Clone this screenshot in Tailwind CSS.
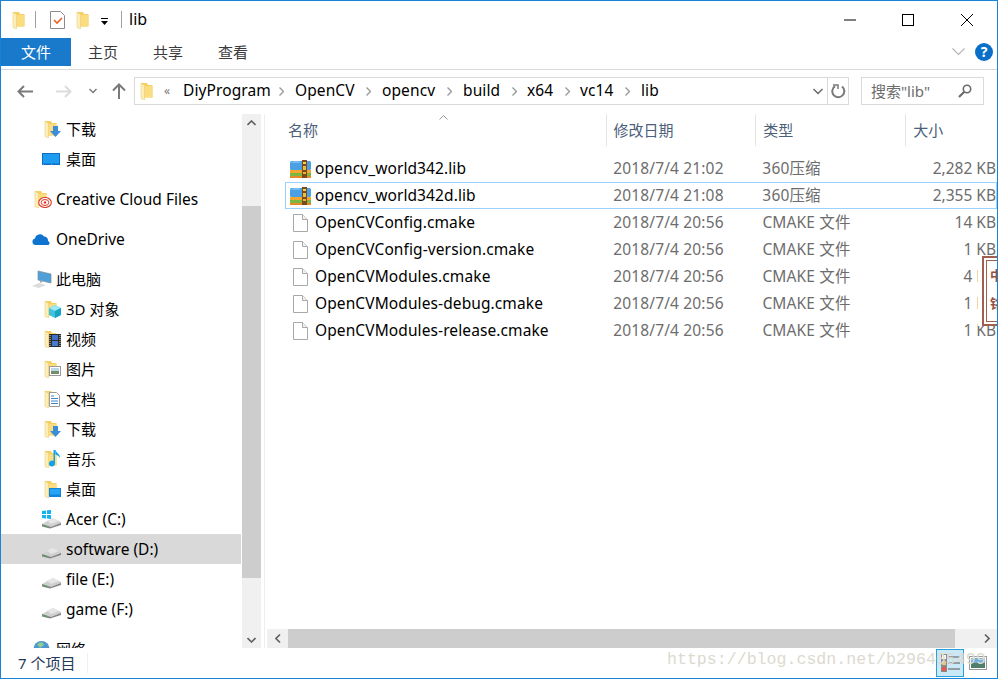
<!DOCTYPE html>
<html lang="zh-CN">
<head>
<meta charset="utf-8">
<script src="https://cdn.jsdelivr.net/npm/@tailwindcss/browser@4"></script>
</head>
<body class="m-0 bg-white">
<svg width="0" height="0" class="absolute">
  <defs>
    <symbol id="fld" viewBox="0 0 13 18">
      <path d="M1 1h6l1 2h4.500v12.500H1z" fill="#f6cf64"/>
      <path d="M3 4h9.500v11.500H3z" fill="#fbdc80"/>
      <path d="M1 1l3.500 2.500V18L1 16.500z" fill="#fdeeb5" stroke="#e8c66c" stroke-width=".5"/>
    </symbol>
    <symbol id="drive" viewBox="0 0 19 12">
      <path d="M0 7L11 1l8 4v2L8 11 0 9z" fill="#d0d0d0"/>
      <path d="M0 7l9 3 10-4v2L8 11.500 0 9.500z" fill="#858585"/>
      <path d="M5 3.500L11 1l6 3-8 3z" fill="#e6e6e6"/>
      <path d="M2 8.500l3 1" stroke="#3fae4e" stroke-width="1.200"/>
    </symbol>
    <symbol id="rar" viewBox="0 0 21 18">
      <rect x="0" y="1" width="21" height="9" rx="1.500" fill="#4b9fe3"/>
      <path d="M0 3l4-2h5l2 2z" fill="#74bdf2"/>
      <rect x="0" y="10" width="21" height="3" fill="#f0a830"/>
      <rect x="0" y="13" width="21" height="3" fill="#7cb742"/>
      <rect x="0" y="16" width="21" height="2" fill="#e58a24"/>
      <rect x="12" y="0" width="5" height="18" fill="#7c4a1d"/>
      <rect x="13" y="2" width="3" height="2" fill="#f5d24a"/>
      <rect x="13" y="6" width="3" height="4" fill="#e8c040"/>
      <rect x="13" y="12" width="3" height="2" fill="#e9b53a"/>
    </symbol>
    <symbol id="doc" viewBox="0 0 15 18">
      <path d="M.5.5h9l5 5v12H.5z" fill="#fff" stroke="#a8a8a8"/>
      <path d="M9.500.5v5h5" fill="#f2f2f2" stroke="#a8a8a8"/>
    </symbol>
  </defs>
</svg>

<div class="relative w-[998px] h-[679px] overflow-hidden border border-[#1883d7] bg-white flex flex-col text-black text-[15.5px] [font-family:'Noto_Sans','Noto_Sans_CJK_SC',sans-serif]">

  <!-- title bar -->
  <div class="h-[37px] shrink-0 flex items-center relative">
    <svg class="ml-[11px] w-[13px] h-[18px]"><use href="#fld"/></svg>
    <div class="ml-[10px] w-px h-[17px] bg-[#a0a0a0]"></div>
    <svg class="ml-[14px] w-[15px] h-[18px]" viewBox="0 0 15 18"><path d="M.5.5h10l4 4v13H.5z" fill="#fff" stroke="#8c8c8c"/><path d="M4 9l3 3 5-5" fill="none" stroke="#e8622a" stroke-width="1.700"/></svg>
    <svg class="ml-[11px] w-[13px] h-[18px]"><use href="#fld"/></svg>
    <svg class="ml-[11px] w-[9px] h-[8px] mt-[4px]" viewBox="0 0 9 8"><path d="M1 0h7v1H1zM1 3h7L4.500 7z" fill="#000"/></svg>
    <div class="ml-[12px] w-px h-[17px] bg-[#a0a0a0]"></div>
    <span class="ml-[7px] text-[16px] -mt-[1px]">lib</span>
    <div class="ml-auto flex items-center">
      <svg class="w-[12px] h-[12px] mr-[46px]" viewBox="0 0 12 12"><path d="M0 6h12" stroke="#000"/></svg>
      <svg class="w-[12px] h-[12px] mr-[47px]" viewBox="0 0 12 12"><rect x=".5" y=".5" width="11" height="11" fill="none" stroke="#000"/></svg>
      <svg class="w-[12px] h-[12px] mr-[24px]" viewBox="0 0 12 12"><path d="M0 0l12 12M12 0L0 12" stroke="#000"/></svg>
    </div>
  </div>

  <!-- ribbon tabs -->
  <div class="h-[32px] shrink-0 flex border-b border-[#d9d9d9] text-[15px] text-[#3b3b3b] relative">
    <div class="w-[70px] h-[28px] bg-[#1979ca] text-white flex items-center justify-center">文件</div>
    <div class="ml-[17px] w-[30px] h-[28px] flex items-center justify-center whitespace-nowrap">主页</div>
    <div class="ml-[35px] w-[30px] h-[28px] flex items-center justify-center whitespace-nowrap">共享</div>
    <div class="ml-[35px] w-[30px] h-[28px] flex items-center justify-center whitespace-nowrap">查看</div>
    <div class="ml-auto flex items-center h-[28px] mr-[4px]">
      <svg class="w-[13px] h-[8px] mr-[10px]" viewBox="0 0 13 8"><path d="M.5.500l6 6 6-6" fill="none" stroke="#b5b5b5" stroke-width="1.200"/></svg>
      <div class="w-[18px] h-[18px] rounded-full bg-[#0a6fc9] text-white text-[14px] font-bold flex items-center justify-center leading-none">?</div>
    </div>
  </div>

  <!-- address row -->
  <div class="h-[42px] shrink-0 flex items-center">
    <svg class="ml-[16px] w-[16px] h-[13px]" viewBox="0 0 16 13"><path d="M7 1L1.500 6.500 7 12M2 6.500h14" fill="none" stroke="#7a7a7a" stroke-width="2"/></svg>
    <svg class="ml-[23px] w-[16px] h-[13px]" viewBox="0 0 16 13"><path d="M9 1l5.500 5.500L9 12M14 6.500H0" fill="none" stroke="#dcdcdc" stroke-width="2"/></svg>
    <svg class="ml-[17px] w-[8px] h-[6px]" viewBox="0 0 8 6"><path d="M.5 1L4 4.500 7.500 1" fill="none" stroke="#7a7a7a" stroke-width="1.500"/></svg>
    <svg class="ml-[15px] w-[14px] h-[16px]" viewBox="0 0 14 16"><path d="M1 7.500L7 1.500l6 6M7 2v14" fill="none" stroke="#7a7a7a" stroke-width="2"/></svg>
    <div class="ml-[8px] w-[715px] h-[28px] border border-[#d9d9d9] flex items-center relative">
      <svg class="ml-[5px] w-[13px] h-[18px] shrink-0"><use href="#fld"/></svg>
      <span class="ml-[11px] w-[12px] text-[12px] text-[#7a7a7a]">«</span>
      <div class="flex items-center whitespace-nowrap tracking-[0.1px]">
        <span class="ml-[7px] w-[96px]">DiyProgram</span>
        <svg class="w-[5px] h-[9px] shrink-0" viewBox="0 0 5 9"><path d="M.5.500l4 4-4 4" fill="none" stroke="#9a9a9a" stroke-width="1.400"/></svg>
        <span class="ml-[11px] w-[71px]">OpenCV</span>
        <svg class="w-[5px] h-[9px] shrink-0" viewBox="0 0 5 9"><path d="M.5.500l4 4-4 4" fill="none" stroke="#9a9a9a" stroke-width="1.400"/></svg>
        <span class="ml-[11px] w-[65px]">opencv</span>
        <svg class="w-[5px] h-[9px] shrink-0" viewBox="0 0 5 9"><path d="M.5.500l4 4-4 4" fill="none" stroke="#9a9a9a" stroke-width="1.400"/></svg>
        <span class="ml-[11px] w-[49px]">build</span>
        <svg class="w-[5px] h-[9px] shrink-0" viewBox="0 0 5 9"><path d="M.5.500l4 4-4 4" fill="none" stroke="#9a9a9a" stroke-width="1.400"/></svg>
        <span class="ml-[10px] w-[38px]">x64</span>
        <svg class="w-[5px] h-[9px] shrink-0" viewBox="0 0 5 9"><path d="M.5.500l4 4-4 4" fill="none" stroke="#9a9a9a" stroke-width="1.400"/></svg>
        <span class="ml-[10px] w-[45px]">vc14</span>
        <svg class="w-[5px] h-[9px] shrink-0" viewBox="0 0 5 9"><path d="M.5.500l4 4-4 4" fill="none" stroke="#9a9a9a" stroke-width="1.400"/></svg>
        <span class="ml-[11px]">lib</span>
      </div>
      <svg class="ml-auto mr-[4px] w-[10px] h-[7px]" viewBox="0 0 10 7"><path d="M.5 1L5 5.500 9.500 1" fill="none" stroke="#6a6a6a" stroke-width="1.500"/></svg>
      <div class="w-[21px] h-[26px] border-l border-[#d9d9d9] flex items-center justify-center">
        <svg class="w-[15px] h-[15px]" viewBox="0 0 15 15"><path d="M4 2.200A6 6 0 1 0 11 2.500" fill="none" stroke="#7a7a7a" stroke-width="2"/><path d="M2 1h5v4" fill="none" stroke="#7a7a7a" stroke-width="1.500"/></svg>
      </div>
    </div>
    <div class="ml-[12px] w-[123px] h-[28px] border border-[#d9d9d9] flex items-center pl-[9px] pr-[9px] text-[15px] text-[#6d6d6d]">
      <span class="whitespace-nowrap">搜索"lib"</span>
      <svg class="ml-auto mr-[2px] w-[14px] h-[14px]" viewBox="0 0 14 14"><circle cx="9" cy="5" r="3.700" fill="none" stroke="#6a6a6a" stroke-width="1.600"/><path d="M6.300 7.800L1 13" stroke="#6a6a6a" stroke-width="2.200"/></svg>
    </div>
  </div>

  <!-- body -->
  <div class="h-[534px] mt-[2px] shrink-0 flex">
    <!-- nav -->
    <div class="w-[240px] shrink-0 overflow-hidden">
      <div class="h-[30px] flex items-center pl-[43px]"><span class="relative w-[22px] h-[18px]"><svg class="absolute left-0 top-0 w-[13px] h-[18px]"><use href="#fld"/></svg><svg class="absolute left-[6px] top-[6px] w-[11px] h-[11px]" viewBox="0 0 11 11"><path d="M3 0h5v5h3L5.500 11 0 5h3z" fill="#3a8dd8"/></svg></span><span class="text-[15px]">下载</span></div>
      <div class="h-[30px] flex items-center pl-[41px]"><svg class="w-[18px] h-[13px] mr-[6px]" viewBox="0 0 18 13"><rect width="18" height="12" fill="#0f6fc6"/><rect x="1" y="1" width="16" height="9.500" fill="#1e9cf2"/><path d="M1 12h16" stroke="#bfe3fb" stroke-dasharray="1 7"/></svg><span class="text-[15px]">桌面</span></div>

      <div class="h-[30px] mt-[10px] flex items-center pl-[33px]"><span class="relative w-[22px] h-[18px]"><svg class="absolute left-0 top-0 w-[13px] h-[18px]"><use href="#fld"/></svg><svg class="absolute left-[4px] top-[7px] w-[14px] h-[11px]" viewBox="0 0 14 11"><ellipse cx="7" cy="5.500" rx="6.300" ry="5" fill="#fff" stroke="#d93a2b" stroke-width="1.100"/><ellipse cx="7" cy="5.500" rx="3.800" ry="3" fill="none" stroke="#d93a2b"/><circle cx="7" cy="5.500" r="1.300" fill="#d93a2b"/></svg></span><span class="pt-[2px]">Creative Cloud Files</span></div>

      <div class="h-[30px] mt-[10px] flex items-center pl-[31px]"><svg class="w-[19px] h-[12px] mr-[5px]" viewBox="0 0 19 12"><path d="M3.500 12A3.300 3.300 0 0 1 3 5.500 5 5 0 0 1 12 3.500 4 4 0 0 1 16 8 2.200 2.200 0 0 1 16.500 12z" fill="#0f74cf"/></svg><span class="pt-[2px]">OneDrive</span></div>

      <div class="h-[30px] mt-[10px] flex items-center pl-[31px]"><svg class="w-[20px] h-[18px] mr-[4px]" viewBox="0 0 20 18"><path d="M6 1l13 3v9L6 10z" fill="#4fa0d8" stroke="#7b8c99" stroke-width=".7"/><path d="M9 10.500v2" stroke="#9aa5ad" stroke-width="2"/><path d="M0 16l7-3 7 2-7 3z" fill="#dcdcdc"/></svg><span class="text-[15px]">此电脑</span></div>

      <div class="h-[30px] flex items-center pl-[43px]"><span class="relative w-[22px] h-[18px]"><svg class="absolute left-0 top-0 w-[13px] h-[18px]"><use href="#fld"/></svg><svg class="absolute left-[5px] top-[5px] w-[12px] h-[13px]" viewBox="0 0 12 13"><path d="M6 0l6 3v7l-6 3-6-3V3z" fill="#3fc3dc"/><path d="M0 3l6 3 6-3-6-3z" fill="#9be7f2"/><path d="M6 6v7l6-3V3z" fill="#17a4c4"/></svg></span><span class="text-[15px]">3D 对象</span></div>
      <div class="h-[30px] flex items-center pl-[43px]"><span class="relative w-[22px] h-[18px]"><svg class="absolute left-0 top-0 w-[13px] h-[18px]"><use href="#fld"/></svg><svg class="absolute left-[5px] top-[4px] w-[12px] h-[13px]" viewBox="0 0 12 13"><rect width="12" height="13" fill="#2d2d2d"/><rect x="3" y="1" width="6" height="5" fill="#3d6fc4"/><rect x="3" y="7" width="6" height="5" fill="#4a7ad0"/><path d="M1 1v11M11 1v11" stroke="#d9d9d9" stroke-dasharray="1 1"/></svg></span><span class="text-[15px]">视频</span></div>
      <div class="h-[30px] flex items-center pl-[43px]"><span class="relative w-[22px] h-[18px]"><svg class="absolute left-0 top-0 w-[13px] h-[18px]"><use href="#fld"/></svg><svg class="absolute left-[5px] top-[6px] w-[12px] h-[10px]" viewBox="0 0 12 10"><rect x=".5" y=".5" width="11" height="9" fill="#fff" stroke="#9a9a9a"/><rect x="2" y="2" width="8" height="3" fill="#bcd6ea"/><rect x="2" y="5" width="8" height="3" fill="#6f8f6f"/></svg></span><span class="text-[15px]">图片</span></div>
      <div class="h-[30px] flex items-center pl-[43px]"><span class="relative w-[22px] h-[18px]"><svg class="absolute left-0 top-0 w-[13px] h-[18px]"><use href="#fld"/></svg><svg class="absolute left-[5px] top-[2px] w-[11px] h-[15px]" viewBox="0 0 11 15"><path d="M.5.500h7l3 3v11H.5z" fill="#fff" stroke="#9a9a9a"/><path d="M2 4h3M2 6.500h7M2 9h7M2 11.500h7" stroke="#3a87c8"/></svg></span><span class="text-[15px]">文档</span></div>
      <div class="h-[30px] flex items-center pl-[43px]"><span class="relative w-[22px] h-[18px]"><svg class="absolute left-0 top-0 w-[13px] h-[18px]"><use href="#fld"/></svg><svg class="absolute left-[6px] top-[6px] w-[11px] h-[11px]" viewBox="0 0 11 11"><path d="M3 0h5v5h3L5.500 11 0 5h3z" fill="#3a8dd8"/></svg></span><span class="text-[15px]">下载</span></div>
      <div class="h-[30px] flex items-center pl-[43px]"><span class="relative w-[22px] h-[18px]"><svg class="absolute left-0 top-0 w-[13px] h-[18px]"><use href="#fld"/></svg><svg class="absolute left-[5px] top-[0px] w-[12px] h-[18px]" viewBox="0 0 12 18"><path d="M6 0v13.500A3 3 0 1 1 4.500 11V0h2c.5 3 5 4 4.500 8-.8-2-3-3-4.500-3.500" fill="#0fa0ee"/></svg></span><span class="text-[15px]">音乐</span></div>
      <div class="h-[30px] flex items-center pl-[43px]"><span class="relative w-[22px] h-[18px]"><svg class="absolute left-0 top-0 w-[13px] h-[18px]"><use href="#fld"/></svg><svg class="absolute left-[5px] top-[8px] w-[12px] h-[9px]" viewBox="0 0 12 9"><rect width="12" height="9" fill="#1284dc"/><rect x="1" y="1" width="10" height="5.500" fill="#28a4f4"/></svg></span><span class="text-[15px]">桌面</span></div>
      <div class="h-[30px] flex items-center pl-[41px]"><span class="relative w-[24px] h-[18px]"><svg class="absolute left-0 top-[7px] w-[19px] h-[12px]"><use href="#drive"/></svg><svg class="absolute left-0 top-0 w-[9px] h-[9px]" viewBox="0 0 9 9"><path d="M0 1l4-.6V4H0zM5 .2L9 0v4H5zM0 5h4v3.600L0 8zM5 5h4v4l-4-.5z" fill="#12b4f0"/></svg></span><span class="pt-[2px]">Acer (C:)</span></div>
      <div class="h-[30px] flex items-center pl-[41px] bg-[#d9d9d9]"><span class="relative w-[24px] h-[18px]"><svg class="absolute left-0 top-[7px] w-[19px] h-[12px]"><use href="#drive"/></svg></span><span class="pt-[2px]">software (D:)</span></div>
      <div class="h-[30px] flex items-center pl-[41px]"><span class="relative w-[24px] h-[18px]"><svg class="absolute left-0 top-[7px] w-[19px] h-[12px]"><use href="#drive"/></svg></span><span class="pt-[2px]">file (E:)</span></div>
      <div class="h-[30px] flex items-center pl-[41px]"><span class="relative w-[24px] h-[18px]"><svg class="absolute left-0 top-[7px] w-[19px] h-[12px]"><use href="#drive"/></svg></span><span class="pt-[2px]">game (F:)</span></div>
      <div class="h-[30px] mt-[10px] flex items-center pl-[31px]"><svg class="w-[19px] h-[18px] mr-[5px]" viewBox="0 0 19 18"><circle cx="9.500" cy="9" r="8" fill="#4f97cf"/><path d="M5 4l5-2 2 3-4 3zM10 10l5-2 1 4-4 3z" fill="#8fcf8f"/></svg><span class="text-[15px]">网络</span></div>
    </div>

    <!-- nav scrollbar -->
    <div class="ml-px w-[19px] shrink-0 bg-[#f0f0f0] flex flex-col">
      <div class="h-[17px] flex items-center justify-center"><svg class="w-[9px] h-[6px]" viewBox="0 0 9 6"><path d="M.5 5L4.500 1l4 4" fill="none" stroke="#606060" stroke-width="1.600"/></svg></div>
      <div class="h-[75px]"></div>
      <div class="h-[372px] bg-[#cdcdcd]"></div>
      <div class="flex-1"></div>
      <div class="h-[17px] flex items-center justify-center"><svg class="w-[9px] h-[6px]" viewBox="0 0 9 6"><path d="M.5 1l4 4 4-4" fill="none" stroke="#606060" stroke-width="1.600"/></svg></div>
    </div>
    <div class="ml-[3px] w-px shrink-0 bg-[#eeeeee]"></div>

    <!-- content -->
    <div class="flex-1 min-w-0 flex flex-col relative overflow-hidden">
      <div class="flex-1 min-h-0 overflow-hidden">
        <!-- header -->
        <div class="h-[32px] flex text-[15px] text-[#4c607a] relative">
          <div class="ml-[23px] w-[318px] flex items-center whitespace-nowrap">名称</div>
          <div class="w-[150px] flex items-center border-l border-[#e5e5e5] pl-[7px]">修改日期</div>
          <div class="w-[150px] flex items-center border-l border-[#e5e5e5] pl-[7px]">类型</div>
          <div class="w-[92px] flex items-center border-l border-[#e5e5e5] pl-[7px]">大小</div>
          <svg class="absolute left-[174px] top-[1px] w-[9px] h-[5px]" viewBox="0 0 9 5"><path d="M.5 4.500l4-4 4 4" fill="none" stroke="#9a9a9a"/></svg>
        </div>
        <div class="h-[9px]"></div>
        <!-- rows -->
        <div class="ml-[20px] h-[27px] flex items-center text-[#6d6d6d] border border-transparent tracking-[0.15px]">
          <div class="w-[320px] pl-[4px] flex items-center text-black whitespace-nowrap tracking-[0.1px]"><svg class="w-[21px] h-[18px] mr-[4px]"><use href="#rar"/></svg>opencv_world342.lib</div>
          <div class="w-[150px] pl-[9px]">2018/7/4 21:02</div>
          <div class="w-[150px] pl-[9px]">360压缩</div>
          <div class="w-[94px] text-right whitespace-nowrap tracking-normal">2,282 KB</div>
        </div>
        <div class="ml-[20px] h-[27px] flex items-center text-[#6d6d6d] border border-[#99d1ff] tracking-[0.15px]">
          <div class="w-[320px] pl-[4px] flex items-center text-black whitespace-nowrap tracking-[0.1px]"><svg class="w-[21px] h-[18px] mr-[4px]"><use href="#rar"/></svg>opencv_world342d.lib</div>
          <div class="w-[150px] pl-[9px]">2018/7/4 21:08</div>
          <div class="w-[150px] pl-[9px]">360压缩</div>
          <div class="w-[94px] text-right whitespace-nowrap tracking-normal">2,355 KB</div>
        </div>
        <div class="ml-[20px] h-[27px] flex items-center text-[#6d6d6d] border border-transparent tracking-[0.15px]">
          <div class="w-[320px] pl-[7px] flex items-center text-black whitespace-nowrap tracking-[0.1px]"><svg class="w-[15px] h-[18px] mr-[7px]"><use href="#doc"/></svg>OpenCVConfig.cmake</div>
          <div class="w-[150px] pl-[9px]">2018/7/4 20:56</div>
          <div class="w-[150px] pl-[9px]">CMAKE 文件</div>
          <div class="w-[94px] text-right whitespace-nowrap tracking-normal">14 KB</div>
        </div>
        <div class="ml-[20px] h-[27px] flex items-center text-[#6d6d6d] border border-transparent tracking-[0.15px]">
          <div class="w-[320px] pl-[7px] flex items-center text-black whitespace-nowrap tracking-[0.1px]"><svg class="w-[15px] h-[18px] mr-[7px]"><use href="#doc"/></svg>OpenCVConfig-version.cmake</div>
          <div class="w-[150px] pl-[9px]">2018/7/4 20:56</div>
          <div class="w-[150px] pl-[9px]">CMAKE 文件</div>
          <div class="w-[94px] text-right whitespace-nowrap tracking-normal">1 KB</div>
        </div>
        <div class="ml-[20px] h-[27px] flex items-center text-[#6d6d6d] border border-transparent tracking-[0.15px]">
          <div class="w-[320px] pl-[7px] flex items-center text-black whitespace-nowrap tracking-[0.1px]"><svg class="w-[15px] h-[18px] mr-[7px]"><use href="#doc"/></svg>OpenCVModules.cmake</div>
          <div class="w-[150px] pl-[9px]">2018/7/4 20:56</div>
          <div class="w-[150px] pl-[9px]">CMAKE 文件</div>
          <div class="w-[94px] text-right whitespace-nowrap tracking-normal">4 KB</div>
        </div>
        <div class="ml-[20px] h-[27px] flex items-center text-[#6d6d6d] border border-transparent tracking-[0.15px]">
          <div class="w-[320px] pl-[7px] flex items-center text-black whitespace-nowrap tracking-[0.1px]"><svg class="w-[15px] h-[18px] mr-[7px]"><use href="#doc"/></svg>OpenCVModules-debug.cmake</div>
          <div class="w-[150px] pl-[9px]">2018/7/4 20:56</div>
          <div class="w-[150px] pl-[9px]">CMAKE 文件</div>
          <div class="w-[94px] text-right whitespace-nowrap tracking-normal">1 KB</div>
        </div>
        <div class="ml-[20px] h-[27px] flex items-center text-[#6d6d6d] border border-transparent tracking-[0.15px]">
          <div class="w-[320px] pl-[7px] flex items-center text-black whitespace-nowrap tracking-[0.1px]"><svg class="w-[15px] h-[18px] mr-[7px]"><use href="#doc"/></svg>OpenCVModules-release.cmake</div>
          <div class="w-[150px] pl-[9px]">2018/7/4 20:56</div>
          <div class="w-[150px] pl-[9px]">CMAKE 文件</div>
          <div class="w-[94px] text-right whitespace-nowrap tracking-normal">1 KB</div>
        </div>
      </div>
      <!-- h scrollbar -->
      <div class="h-[19px] ml-[2px] shrink-0 bg-[#f0f0f0] flex">
        <div class="w-[21px] flex items-center justify-center"><svg class="w-[6px] h-[9px]" viewBox="0 0 6 9"><path d="M5 .5l-4 4 4 4" fill="none" stroke="#606060" stroke-width="1.600"/></svg></div>
        <div class="w-[667px] bg-[#cdcdcd]"></div>
        <div class="ml-auto w-[21px] flex items-center justify-center"><svg class="w-[6px] h-[9px]" viewBox="0 0 6 9"><path d="M1 .5l4 4-4 4" fill="none" stroke="#606060" stroke-width="1.600"/></svg></div>
      </div>
    </div>
  </div>

  <!-- status bar -->
  <div class="flex-1 flex items-center relative text-[15px] text-[#1f3a5a]">
    <span class="ml-[17px]">7 个项目</span>
    <div class="ml-[12px] w-px h-[20px] bg-[#f0f0f0]"></div>
    <div class="ml-auto flex items-center h-full mr-[10px]">
      <div class="w-[28px] h-[28px] bg-[#cbe8f6] border border-[#26a0da] flex items-center justify-center">
        <svg class="w-[19px] h-[18px]" viewBox="0 0 19 18"><rect x=".5" y=".5" width="5" height="5" fill="#fff" stroke="#8a8a8a"/><rect x=".5" y="6.500" width="5" height="5" fill="#e6c48a" stroke="#8a8a8a"/><rect x=".5" y="12.500" width="5" height="5" fill="#e25a4a" stroke="#8a8a8a"/><path d="M7 3h12M7 9h12M7 15h12" stroke="#555"/></svg>
      </div>
      <svg class="ml-[5px] w-[18px] h-[14px]" viewBox="0 0 18 14"><rect x=".5" y=".5" width="17" height="13" fill="#fff" stroke="#9a9a9a"/><rect x="2" y="2" width="14" height="5" fill="#6fb0de"/><rect x="2" y="7" width="14" height="5" fill="#4f7e6a"/></svg>
    </div>
  </div>

  <!-- stamp over the content -->
  <div class="absolute left-[977px] top-[255px] w-[20px] h-[70px] bg-white flex justify-end">
    <div class="w-[16px] h-[70px] border-2 border-[#a0604f] border-r-0 pl-[2px] pt-[2px] pb-[2px]">
      <div class="h-full border border-[#a0604f] border-r-0 overflow-hidden text-[13px] font-bold text-[#97503f] leading-[28px] pl-[3px] whitespace-nowrap">
        <div>中</div><div>铭</div>
      </div>
    </div>
  </div>

  <!-- watermark -->
  <div class="absolute left-[666px] top-[649px] text-[16.6px] leading-[20px] text-[#dcdad0] whitespace-nowrap pointer-events-none [font-family:'Liberation_Mono',monospace]">https://blog.csdn.net/b296405499</div>
</div>
</body>
</html>
